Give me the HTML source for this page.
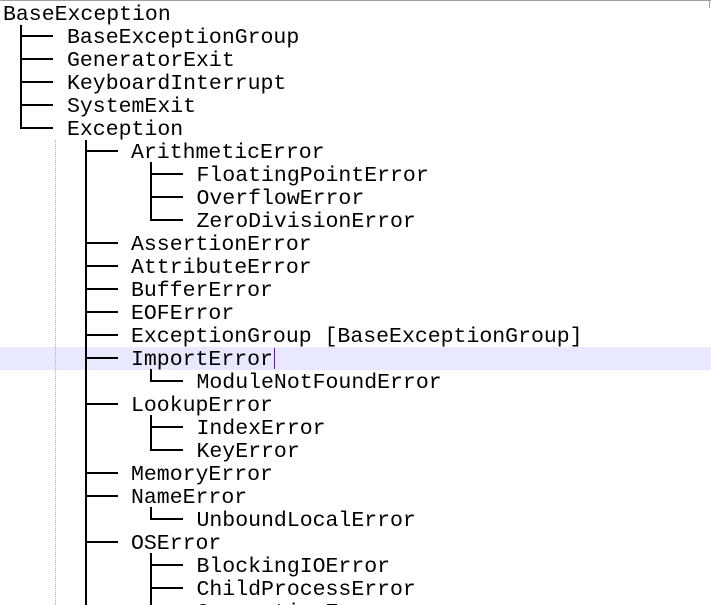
<!DOCTYPE html>
<html style="overflow:hidden;width:711px;height:605px"><head><meta charset="utf-8"><style>
html,body{margin:0;overflow:hidden}
body{width:711px;height:605px;background:#fff;position:relative;font-family:"Liberation Mono","Courier New",monospace;font-size:21.5px;color:#000}
.r{position:absolute;height:23px;line-height:23px;white-space:pre}
.v{position:absolute;width:2px;background:#000}
.h{position:absolute;height:2px;background:#000}
</style></head><body>
<div style="position:absolute;left:0;top:0;width:711px;height:1px;background:#a0a0a0"></div>
<div style="position:absolute;left:709px;top:0;width:1px;height:8px;background:#a0a0a0"></div>
<div style="position:absolute;left:0;top:347px;width:711px;height:23px;background:#e8e8ff"></div>
<div style="position:absolute;left:55px;top:140px;width:0;height:465px;border-left:1px dotted #b0b0b0"></div>
<div style="position:absolute;left:274px;top:348px;width:1px;height:21px;background:#8000ff"></div>
<div id="t"></div>
<script>
var rows=[[0,"BaseException"],[1,"BaseExceptionGroup"],[1,"GeneratorExit"],[1,"KeyboardInterrupt"],[1,"SystemExit"],[1,"Exception"],[2,"ArithmeticError"],[3,"FloatingPointError"],[3,"OverflowError"],[3,"ZeroDivisionError"],[2,"AssertionError"],[2,"AttributeError"],[2,"BufferError"],[2,"EOFError"],[2,"ExceptionGroup [BaseExceptionGroup]"],[2,"ImportError"],[3,"ModuleNotFoundError"],[2,"LookupError"],[3,"IndexError"],[3,"KeyError"],[2,"MemoryError"],[2,"NameError"],[3,"UnboundLocalError"],[2,"OSError"],[3,"BlockingIOError"],[3,"ChildProcessError"],[3,"ConnectionError"]];
var xs=[3,67,131,196.5],lx=[0,20,85,150];
var h="";
rows.forEach(function(r,i){var c=13+23*i;
h+='<div class="r" style="left:'+xs[r[0]]+'px;top:'+(c-9)+'px">'+r[1]+'</div>';
if(r[0]>0){h+='<div class="h" style="left:'+lx[r[0]]+'px;top:'+(c-1)+'px;width:33px"></div>';}
});
h+='<div class="v" style="left:20px;top:25px;height:104px"></div>';
h+='<div class="v" style="left:85px;top:140px;height:465px"></div>';
[[6,9],[15,16],[17,19],[21,22],[23,26]].forEach(function(p){var t=13+23*p[0]+11,b=Math.min(604,13+23*p[1]);h+='<div class="v" style="left:150px;top:'+t+'px;height:'+(b-t+1)+'px"></div>';});
document.getElementById("t").innerHTML=h;
</script>
</body></html>
